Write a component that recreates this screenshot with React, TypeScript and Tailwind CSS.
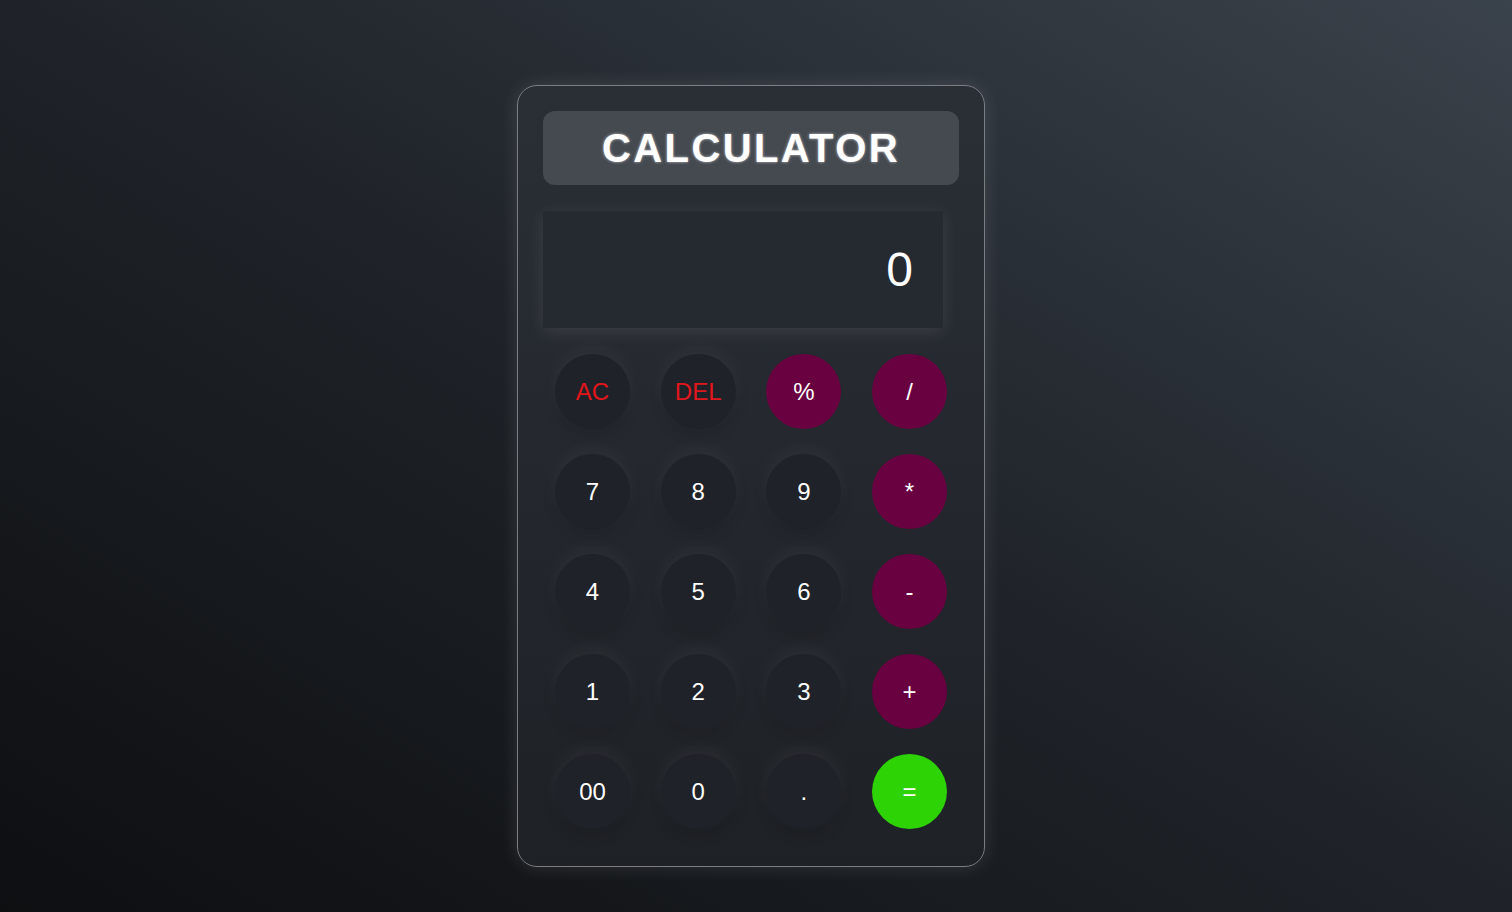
const rows: { label: string; kind: "num" | "clear" | "op" | "eq" }[][] = [
  [
    { label: "AC", kind: "clear" },
    { label: "DEL", kind: "clear" },
    { label: "%", kind: "op" },
    { label: "/", kind: "op" },
  ],
  [
    { label: "7", kind: "num" },
    { label: "8", kind: "num" },
    { label: "9", kind: "num" },
    { label: "*", kind: "op" },
  ],
  [
    { label: "4", kind: "num" },
    { label: "5", kind: "num" },
    { label: "6", kind: "num" },
    { label: "-", kind: "op" },
  ],
  [
    { label: "1", kind: "num" },
    { label: "2", kind: "num" },
    { label: "3", kind: "num" },
    { label: "+", kind: "op" },
  ],
  [
    { label: "00", kind: "num" },
    { label: "0", kind: "num" },
    { label: ".", kind: "num" },
    { label: "=", kind: "eq" },
  ],
];

const soft =
  "bg-[#1f2228] shadow-[0_-6px_18px_rgba(255,255,255,0.05),0_6px_14px_rgba(0,0,0,0.12)]";

const kindClass = {
  num: `${soft} text-white`,
  clear: `${soft} text-[#e0161c]`,
  op: "bg-[#690040] text-white",
  eq: "bg-[#2ed305] text-white",
};

export default function App() {
  return (
    <div
      className="flex min-h-screen justify-center bg-gradient-to-tr from-[#0d0f11] via-[#1f2329] to-[#3a424b] pr-[10px] pt-[85px]"
      style={{ fontFamily: '"Liberation Sans", Arial, sans-serif' }}
    >
      <div className="h-[782px] w-[468px] rounded-[20px] border border-[#7a7d82] bg-gradient-to-b from-[#2a2f36] to-[#1e2126] px-[25px] pt-[25px] shadow-[0_0_18px_rgba(255,255,255,0.12)]">
        <div className="flex h-[74px] items-center justify-center rounded-[12px] bg-[#454950]">
          <h1 className="text-[40px] font-bold tracking-[2.4px] text-white [text-shadow:0_0_3px_rgba(255,255,255,0.7)]">
            CALCULATOR
          </h1>
        </div>
        <div className="mt-[26px] flex h-[117px] w-[400px] items-center justify-end bg-[#252a31] pr-[30px] text-[48px] text-white shadow-[0_4px_16px_rgba(255,255,255,0.1)]">
          0
        </div>
        <div className="mt-[26px] flex flex-col gap-[25px] px-[12px]">
          {rows.map((row, i) => (
            <div key={i} className="flex justify-between">
              {row.map((b) => (
                <button
                  key={b.label}
                  className={`flex h-[75px] w-[75px] items-center justify-center rounded-full text-[24px] ${kindClass[b.kind]}`}
                >
                  {b.label}
                </button>
              ))}
            </div>
          ))}
        </div>
      </div>
    </div>
  );
}
